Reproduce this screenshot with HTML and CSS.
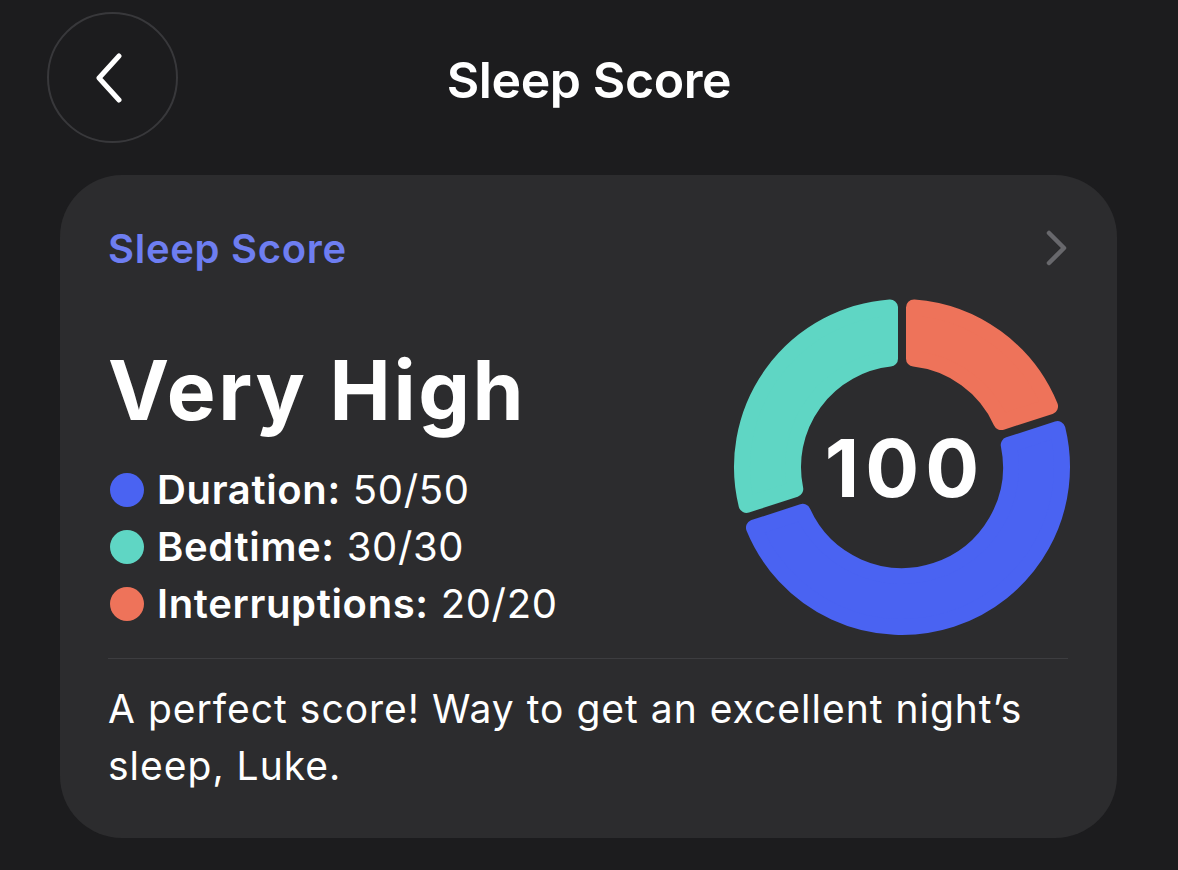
FILE: index.html
```html
<!DOCTYPE html>
<html lang="en">
<head>
<meta charset="utf-8">
<title>Sleep Score</title>
<link rel="stylesheet" href="styles.css">
</head>
<body>
<header class="topbar">
  <button class="back" aria-label="Back">
    <svg width="30" height="50" viewBox="0 0 30 50"><path d="M25 3 L5 25 L25 47" fill="none" stroke="#fff" stroke-width="5" stroke-linecap="round" stroke-linejoin="round"/></svg>
  </button>
  <h1 class="title">Sleep Score</h1>
</header>
<main class="card">
  <div class="card-head">
    <span class="label">Sleep Score</span>
    <svg class="chev" width="26" height="38" viewBox="0 0 26 38"><path d="M5 4 L20 19 L5 34" fill="none" stroke="#68686c" stroke-width="4.5" stroke-linecap="round" stroke-linejoin="round"/></svg>
  </div>
  <div class="card-main">
    <div class="summary">
      <div class="grade">Very High</div>
      <ul class="legend">
        <li><span class="dot blue"></span><b>Duration:</b>&nbsp;50/50</li>
        <li><span class="dot teal"></span><b>Bedtime:</b>&nbsp;30/30</li>
        <li><span class="dot coral"></span><b>Interruptions:</b>&nbsp;20/20</li>
      </ul>
    </div>
    <div class="donut">
      <svg width="340" height="340" viewBox="-170 -170 340 340">
        <path class="seg coral-seg" d="M 12.00 -159.55 A 160 160 0 0 1 148.03 -60.71 L 99.33 -44.90 A 109 109 0 0 0 12.00 -108.34 Z"/>
        <path class="seg blue-seg" d="M 155.45 -37.89 A 160 160 0 0 1 -148.03 60.71 L -99.33 44.89 A 109 109 0 0 0 106.74 -22.06 Z"/>
        <path class="seg teal-seg" d="M -155.45 37.89 A 160 160 0 0 1 -12.00 -159.55 L -12.00 -108.34 A 109 109 0 0 0 -106.74 22.07 Z"/>
      </svg>
      <span class="score">100</span>
    </div>
  </div>
  <hr class="divider">
  <p class="message">A perfect score! Way to get an excellent night’s sleep, Luke.</p>
</main>
</body>
</html>
```
FILE: styles.css
```css
* { box-sizing: border-box; }
html, body { margin: 0; padding: 0; }
body {
  background: #1c1c1e;
  color: #fff;
  font-family: Inter, "Noto Sans", "Liberation Sans", sans-serif;
  width: 1178px;
  height: 870px;
  overflow: hidden;
}
.topbar {
  position: relative;
  height: 175px;
  display: flex;
  align-items: flex-start;
  padding: 12px 0 0 47px;
}
.back {
  width: 131px;
  height: 131px;
  border-radius: 50%;
  border: 2px solid #38383b;
  background: transparent;
  display: flex;
  align-items: center;
  justify-content: center;
  padding: 0 8px 0 0;
  margin: 0;
}
.title {
  position: absolute;
  left: 0;
  right: 0;
  top: 52px;
  margin: 0;
  text-align: center;
  font-size: 50px;
  line-height: 56px;
  font-weight: 600;
  letter-spacing: -0.4px;
}
.card {
  margin: 0 61px 0 60px;
  height: 663px;
  background: #2c2c2e;
  border-radius: 62px;
  padding: 50px 49px 0 48px;
}
.card-head {
  display: flex;
  justify-content: space-between;
  align-items: center;
  height: 46px;
}
.label {
  color: #6e7ef1;
  font-size: 40px;
  font-weight: 600;
  letter-spacing: 0.7px;
}
.chev { margin-right: -2px; }
.card-main {
  display: flex;
  justify-content: space-between;
  align-items: flex-start;
  margin-top: 26px;
  height: 361px;
}
.summary { padding-top: 46px; }
.grade {
  font-size: 82px;
  font-weight: 700;
  line-height: 96px;
  letter-spacing: 2.6px;
}
.legend {
  list-style: none;
  margin: 22px 0 0;
  padding: 0;
}
.legend li {
  display: flex;
  align-items: center;
  height: 57px;
  font-size: 40px;
  font-weight: 400;
  letter-spacing: 0.65px;
}
.legend b { font-weight: 600; }
.dot {
  width: 34px;
  height: 34px;
  border-radius: 50%;
  margin: 0 13px 0 2px;
  flex: none;
}
.dot.blue { background: #4a63f2; }
.dot.teal { background: #5fd6c4; }
.dot.coral { background: #ee735a; }
.donut {
  position: relative;
  width: 340px;
  height: 340px;
  margin-right: -4px;
}
.donut svg { display: block; }
.seg { stroke-width: 16; stroke-linejoin: round; }
.blue-seg { fill: #4a63f2; stroke: #4a63f2; }
.teal-seg { fill: #5fd6c4; stroke: #5fd6c4; }
.coral-seg { fill: #ee735a; stroke: #ee735a; }
.score {
  position: absolute;
  inset: 0;
  display: flex;
  align-items: center;
  justify-content: center;
  font-size: 80px;
  font-weight: 700;
  letter-spacing: 6px;
  padding-left: 6px;
}
.divider {
  border: 0;
  border-top: 1px solid #3d3d40;
  margin: 0;
}
.message {
  margin: 21px 0 0;
  font-size: 39px;
  line-height: 57px;
  font-weight: 400;
  letter-spacing: 1px;
  max-width: 960px;
}
```
